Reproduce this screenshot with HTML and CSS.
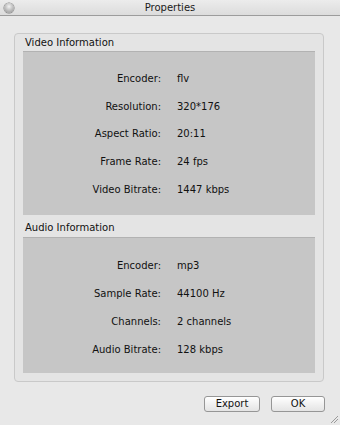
FILE: index.html
```html
<!DOCTYPE html>
<html>
<head>
    <title>Properties</title>
    <link rel="stylesheet" href="styles.css">
</head>
<body>
    <div class="window">
        <div class="titlebar">
            <span class="close-btn"></span>
            <span class="title">Properties</span>
            <span></span>
        </div>

        <div class="group">
            <div class="group-title">Video Information</div>
            <div class="panel video">
                <div class="row"><span class="label">Encoder:</span><span class="value">flv</span></div>
                <div class="row"><span class="label">Resolution:</span><span class="value">320*176</span></div>
                <div class="row"><span class="label">Aspect Ratio:</span><span class="value">20:11</span></div>
                <div class="row"><span class="label">Frame Rate:</span><span class="value">24 fps</span></div>
                <div class="row"><span class="label">Video Bitrate:</span><span class="value">1447 kbps</span></div>
            </div>

            <div class="group-title second">Audio Information</div>
            <div class="panel audio">
                <div class="row"><span class="label">Encoder:</span><span class="value">mp3</span></div>
                <div class="row"><span class="label">Sample Rate:</span><span class="value">44100 Hz</span></div>
                <div class="row"><span class="label">Channels:</span><span class="value">2 channels</span></div>
                <div class="row"><span class="label">Audio Bitrate:</span><span class="value">128 kbps</span></div>
            </div>
        </div>

        <div class="buttons">
            <button class="btn export">Export</button>
            <button class="btn ok">OK</button>
        </div>

        <!-- resize grip -->
        <svg class="grip" width="8" height="8" viewBox="0 0 8 8">
            <line x1="1" y1="8" x2="8" y2="1" stroke="#9a9a9a" stroke-width="1"/>
            <line x1="4" y1="8" x2="8" y2="4" stroke="#9a9a9a" stroke-width="1"/>
        </svg>
    </div>
</body>
</html>
```

FILE: styles.css
```css
body {
    margin: 0;
    padding: 0;
    background-color: #e8e8e8;
    font-family: "DejaVu Sans", Verdana, sans-serif;
    font-size: 10px;
    color: #111;
}
.window {
    position: relative;
    width: 340px;
    height: 425px;
    background-color: #e8e8e8;
    overflow: hidden;
}
.titlebar {
    display: grid;
    grid-template-columns: 1fr auto 1fr;
    align-items: center;
    height: 15px;
    background: linear-gradient(#ececec, #dcdcdc);
    border-bottom: 1px solid #9c9c9c;
}
.close-btn {
    justify-self: start;
    width: 10px;
    height: 10px;
    margin-left: 4px;
    border-radius: 50%;
    background: radial-gradient(circle at 50% 35%, #f2f2f2 0%, #b8b8b8 55%, #8e8e8e 100%);
    box-shadow: 0 0 0 0.5px #7d7d7d;
}
.title {
    line-height: 15px;
    color: #1a1a1a;
}
.group {
    width: 292px;
    margin: 17px 0 0 14px;
    padding: 0 8px 8px 8px;
    border: 1px solid #c9c9c9;
    border-radius: 4px;
    background-color: #e4e4e4;
}
.group-title {
    padding: 2px 0 1px 2px;
    line-height: 14px;
    color: #111;
}
.group-title.second {
    padding-top: 6px;
    padding-bottom: 2px;
}
.panel {
    background-color: #c6c6c6;
    border-top: 1px solid #b2b2b2;
}
.panel.video {
    height: 164px;
    padding-top: 13px;
    box-sizing: border-box;
}
.panel.audio {
    height: 136px;
    padding-top: 13px;
    box-sizing: border-box;
}
.row {
    display: grid;
    grid-template-columns: 138px 1fr;
    column-gap: 16px;
    align-items: center;
}
.video .row {
    height: 27.6px;
}
.audio .row {
    height: 28.2px;
}
.label {
    text-align: right;
}
.buttons {
    display: flex;
    justify-content: flex-end;
    gap: 11px;
    margin: 14px 15px 0 0;
}
.btn {
    height: 16px;
    padding: 0;
    border: 1px solid #969696;
    border-radius: 3px;
    background: linear-gradient(#ffffff, #f1f1f1 50%, #e4e4e4);
    font-family: "DejaVu Sans", Verdana, sans-serif;
    font-size: 10px;
    color: #111;
    line-height: 14px;
}
.btn.export {
    width: 56px;
}
.btn.ok {
    width: 54px;
}
.grip {
    position: absolute;
    right: 2px;
    bottom: 2px;
}
```
